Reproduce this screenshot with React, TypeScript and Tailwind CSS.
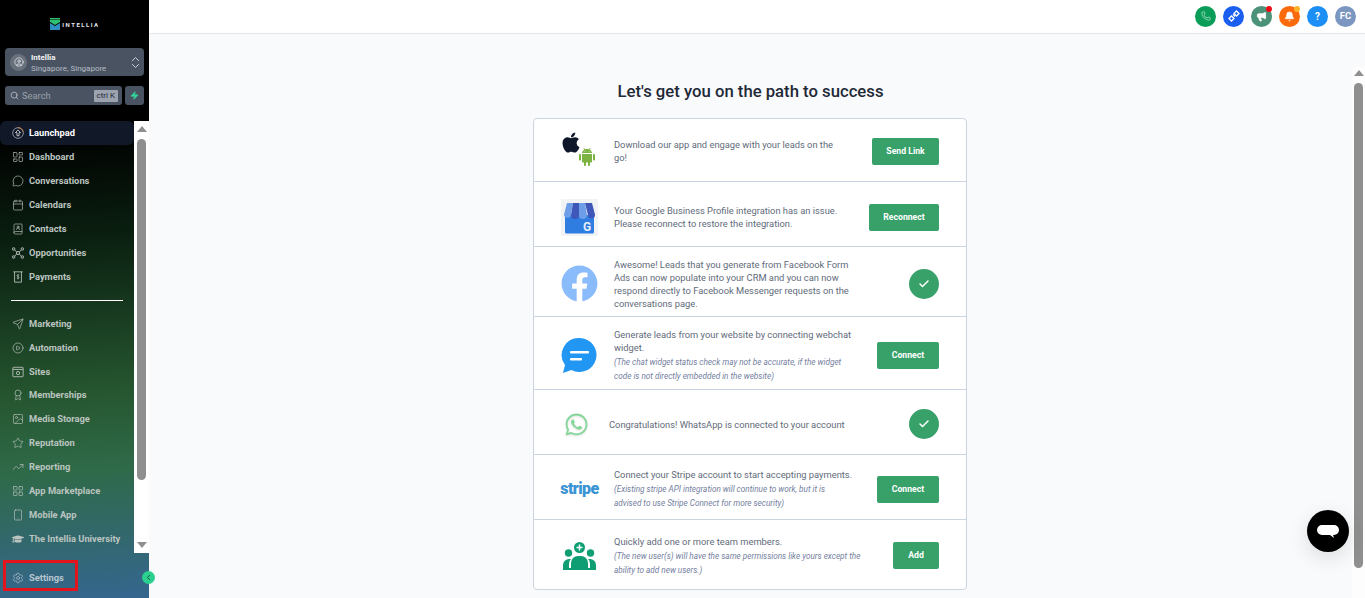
import { ReactNode } from 'react';
import {
  Phone,
  Megaphone,
  Bell,
  LayoutGrid,
  LayoutDashboard,
  MessageCircle,
  Calendar,
  BookUser,
  Send,
  CirclePlay,
  Award,
  Image,
  Star,
  TrendingUp,
  Smartphone,
  Settings,
  Search,
  Zap,
  ChevronsUpDown,
  ChevronLeft,
  CircleUser,
  Check,
} from 'lucide-react';
import { FaApple, FaFacebook, FaGraduationCap } from 'react-icons/fa';
import { FcAndroidOs } from 'react-icons/fc';
import { IoLogoWhatsapp } from 'react-icons/io5';

type IconProps = { className?: string; strokeWidth?: number };

function OpportunitiesIcon({ className }: IconProps) {
  return (
    <svg viewBox="0 0 14 14" className={className} fill="none" stroke="currentColor" strokeWidth="1.100">
      <circle cx="7" cy="7" r="1.800" />
      <rect x="0.600" y="1" width="2.600" height="2.600" rx="0.600" />
      <rect x="10.800" y="1" width="2.600" height="2.600" rx="0.600" />
      <rect x="0.600" y="10.400" width="2.600" height="2.600" rx="0.600" />
      <rect x="10.800" y="10.400" width="2.600" height="2.600" rx="0.600" />
      <path d="M3.200 3.600 5.600 5.800M10.800 3.600 8.400 5.800M3.200 10.400 5.600 8.200M10.800 10.400 8.400 8.200" />
    </svg>
  );
}

function PaymentsIcon({ className }: IconProps) {
  return (
    <svg viewBox="0 0 14 14" className={className} fill="none" stroke="currentColor" strokeWidth="1">
      <path d="M1.500 1h11M3 1v12h8V1" />
      <path d="M8.500 4.800C8 4.200 6 4.100 5.800 5.300c-.200 1.400 2.700 1 2.500 2.500-.200 1.200-2.200 1.100-2.800.400M7 3.600v6.200" strokeWidth="0.800" />
    </svg>
  );
}

function SitesIcon({ className }: IconProps) {
  return (
    <svg viewBox="0 0 14 14" className={className} fill="none" stroke="currentColor" strokeWidth="1">
      <rect x="1" y="1.500" width="12" height="11" rx="0.500" />
      <path d="M1 4h12" />
      <circle cx="7" cy="8.200" r="1.900" />
    </svg>
  );
}

function LaunchpadIcon({ className }: IconProps) {
  return (
    <svg viewBox="0 0 14 14" className={className} fill="none" strokeWidth="0.900">
      <circle cx="7" cy="7" r="6.200" stroke="#aeb4bd" />
      <path d="M7 .800A6.200 6.200 0 0 1 13 5.500" stroke="#f08a3c" />
      <path d="M7 3.400 4 6.600h1.800v3.600h2.400V6.600H10z" stroke="#e5e7eb" />
    </svg>
  );
}

const TOP_NAV = [
  { label: 'Dashboard', icon: LayoutDashboard },
  { label: 'Conversations', icon: MessageCircle },
  { label: 'Calendars', icon: Calendar },
  { label: 'Contacts', icon: BookUser },
  { label: 'Opportunities', icon: OpportunitiesIcon },
  { label: 'Payments', icon: PaymentsIcon },
];

const BOTTOM_NAV = [
  { label: 'Marketing', icon: Send },
  { label: 'Automation', icon: CirclePlay },
  { label: 'Sites', icon: SitesIcon },
  { label: 'Memberships', icon: Award, tight: true },
  { label: 'Media Storage', icon: Image },
  { label: 'Reputation', icon: Star },
  { label: 'Reporting', icon: TrendingUp },
  { label: 'App Marketplace', icon: LayoutGrid },
  { label: 'Mobile App', icon: Smartphone },
  { label: 'The Intellia University', icon: FaGraduationCap },
];

function NavItem({ label, icon: Icon, tight }: { label: string; icon: (p: IconProps) => ReactNode; tight?: boolean }) {
  return (
    <div className={`flex h-6 items-center gap-[5px] pl-[12px] text-[9.330px] font-bold whitespace-nowrap text-[#bcc4c0] ${tight ? '-mt-px' : ''}`}>
      <Icon className="h-[12px] w-[12px] shrink-0" strokeWidth={1.3} />
      <span>{label}</span>
    </div>
  );
}

function Sidebar() {
  return (
    <aside className="flex h-full w-[149px] shrink-0 flex-col bg-[linear-gradient(176deg,#000_22%,#0a1f10_40%,#25552f_65%,#2f6a48_78%,#35668f_100%)]">
      <div className="flex h-[48px] items-center justify-center gap-[2px] pl-[1px]">
        <svg viewBox="0 0 10 12" className="h-[12px] w-[10px]">
          <path d="M0 0h10v1.500H0z" fill="#2fbf71" />
          <path d="M0 2h10v2L5 7 0 4z" fill="#2fbf71" />
          <path d="M0 5l5 3 5-3v7H0z" fill="#2f8fc0" />
        </svg>
        <span className="text-[6px] font-bold tracking-[1.500px] text-[#e5e7eb]">INTELLIA</span>
      </div>

      <div className="mx-[5px] flex h-[28px] items-center rounded-[4px] bg-[#4a5361] pl-[5px] pr-[1px]">
        <div className="flex h-[17px] w-[17px] items-center justify-center rounded-full bg-[#69717d]">
          <CircleUser className="h-[10px] w-[10px] text-white" strokeWidth={1.5} />
        </div>
        <div className="ml-[4px] flex-1 pt-[2px] text-[8px] leading-[11px]">
          <div className="font-bold text-[#f3f4f6]">Intellia</div>
          <div className="text-[#b6bcc5]">Singapore, Singapore</div>
        </div>
        <ChevronsUpDown className="h-[15px] w-[15px] text-[#d1d5db]" strokeWidth={1.5} />
      </div>

      <div className="mx-[5px] mt-[10px] flex gap-[3px]">
        <div className="flex h-[19px] w-[117px] items-center rounded-[3px] bg-[#4a5361] pl-[5px] pr-[4px]">
          <Search className="h-[9px] w-[9px] text-[#c5cad1]" strokeWidth={2} />
          <span className="ml-[3px] flex-1 pt-[1px] text-[9.330px] text-[#9aa1ac]">Search</span>
          <span className="rounded-[1px] bg-[#9ca3af] px-[3px] text-[8px] leading-[12px] text-[#1f2937]">ctrl K</span>
        </div>
        <div className="flex h-[19px] w-[19px] items-center justify-center rounded-[3px] bg-[#4a5361]">
          <Zap className="h-[9px] w-[9px] fill-[#34d399] text-[#34d399]" />
        </div>
      </div>

      <div className="mt-[16px] flex min-h-0 flex-1">
        <div className="w-[134px] shrink-0">
          <div className="flex h-6 items-center gap-[5px] rounded-[6px] bg-[#111827] pl-[12px] text-[9.330px] font-bold text-white">
            <LaunchpadIcon className="h-[12px] w-[12px] shrink-0" />
            <span>Launchpad</span>
          </div>
          {TOP_NAV.map((item) => (
            <NavItem key={item.label} {...item} />
          ))}
          <div className="mx-[11px] my-[11px] h-px bg-white" />
          {BOTTOM_NAV.map((item) => (
            <NavItem key={item.label} {...item} />
          ))}
        </div>
        <div className="flex h-[432px] w-[15px] flex-col items-center bg-white pt-[5px] pb-[5px]">
          <div className="h-0 w-0 border-x-[5px] border-b-[6px] border-x-transparent border-b-[#8f8f8f]" />
          <div className="mt-[7px] h-[341px] w-[9px] rounded-full bg-[#8f8f8f]" />
          <div className="mt-auto h-0 w-0 border-x-[5px] border-t-[6px] border-x-transparent border-t-[#8f8f8f]" />
        </div>
      </div>

      <div className="relative flex h-[45px] shrink-0 items-center">
        <div className="ml-[3px] flex h-[31px] w-[75px] items-center gap-[5px] border-[3px] border-[#e3141c] pt-[5px] pl-[6px] text-[9.330px] font-bold text-[#b9c6d0]">
          <Settings className="h-[12px] w-[12px]" strokeWidth={1.3} />
          <span>Settings</span>
        </div>
        <div className="absolute left-[142px] top-[18px] flex h-[13px] w-[13px] items-center justify-center rounded-full bg-[#2bcf8f]">
          <ChevronLeft className="h-[9px] w-[9px] text-[#14532d]" strokeWidth={2.5} />
        </div>
      </div>
    </aside>
  );
}

function HeaderBadge({ color, dot, children }: { color: string; dot?: string; children: ReactNode }) {
  return (
    <div className={`relative flex h-[21px] w-[21px] items-center justify-center rounded-full text-white ${color}`}>
      {children}
      {dot && <span className={`absolute right-0 top-0 h-[6px] w-[6px] rounded-full ${dot}`} />}
    </div>
  );
}

function Header() {
  return (
    <header className="flex h-[34px] shrink-0 items-center justify-end gap-[7px] border-b border-b-[#e5e7eb] bg-white pr-[9px] pb-[1px]">
      <HeaderBadge color="bg-[#0a9d58]">
        <Phone className="h-[10px] w-[10px] text-[#c9efd8]" strokeWidth={1.6} />
      </HeaderBadge>
      <HeaderBadge color="bg-[#1a5ff0]">
        <svg viewBox="0 0 12 12" className="h-[12px] w-[12px]" fill="none" stroke="#fff" strokeWidth="1.300">
          <path d="M3.500 6 6 8.500 3.500 11 1 8.500z" />
          <path d="M8.500 1 11 3.500 8.500 6 6 3.500z" />
          <path d="M5 4.500 7 6.500" />
        </svg>
      </HeaderBadge>
      <HeaderBadge color="bg-[#4c9279]" dot="bg-[#f00a14]">
        <Megaphone className="h-[11px] w-[11px] fill-white" strokeWidth={1.5} />
      </HeaderBadge>
      <HeaderBadge color="bg-[#fb6a0c]" dot="bg-[#fbb32a]">
        <Bell className="h-[11px] w-[11px] fill-white" strokeWidth={1.5} />
      </HeaderBadge>
      <HeaderBadge color="bg-[#1b8ff5]">
        <span className="text-[10px] font-bold">?</span>
      </HeaderBadge>
      <HeaderBadge color="bg-[#7b96c0]">
        <span className="text-[9.500px] font-bold">FC</span>
      </HeaderBadge>
    </header>
  );
}

function StoreIcon() {
  return (
    <svg viewBox="0 0 37 37" className="h-[37px] w-[37px]">
      <rect width="37" height="37" fill="#f1f3f4" />
      <path d="M4 16h29v17a1.500 1.500 0 0 1-1.500 1.500H5.500A1.500 1.500 0 0 1 4 33z" fill="#2f7de0" />
      <path d="M6 4h6l-2 11a3.500 3.500 0 0 1-7 .500z" fill="#6f9ee8" />
      <path d="M12 4h6v12a4 4 0 0 1-8 0z" fill="#3f57b8" />
      <path d="M18 4h6l2 12a4 4 0 0 1-8 0z" fill="#6f9ee8" />
      <path d="M24 4h7l3 11.500a3.500 3.500 0 0 1-7 .500z" fill="#3f57b8" />
      <text x="26" y="32" textAnchor="middle" fontSize="12" fontWeight="700" fill="#e5edf9" fontFamily="Roboto, sans-serif">
        G
      </text>
    </svg>
  );
}

function MessengerIcon() {
  return (
    <svg viewBox="0 0 37 37" className="h-[37px] w-[37px]">
      <path d="M18.500 1a17 17 0 1 1-8 32L2 36l2-8A17 17 0 0 1 18.500 1z" fill="#2196f3" />
      <rect x="9" y="14" width="19" height="2.500" rx="1" fill="#fff" />
      <rect x="9" y="21" width="12" height="2.500" rx="1" fill="#fff" />
    </svg>
  );
}

function TeamIcon() {
  return (
    <svg viewBox="0 0 33 28" className="h-[28px] w-[33px]">
      <circle cx="16.500" cy="5.500" r="5.500" fill="#0f9d73" />
      <path d="M16.500 2.500v6M13.500 5.500h6" stroke="#fff" strokeWidth="1.500" />
      <circle cx="5.500" cy="11" r="3.700" fill="#0f9d73" />
      <circle cx="27.500" cy="11" r="3.700" fill="#0f9d73" />
      <path d="M0 28v-5a6 6 0 0 1 6-6h2a6 6 0 0 0-2 5v4h21v-4a6 6 0 0 0-2-5h2a6 6 0 0 1 6 6v5z" fill="#0f9d73" />
      <path d="M8 26v-5a7 7 0 0 1 7-7h3a7 7 0 0 1 7 7v5z" fill="#0f9d73" />
    </svg>
  );
}

function ActionButton({ label, width }: { label: string; width: string }) {
  return (
    <button className={`flex h-[27px] items-center justify-center rounded-[2px] bg-[#38a169] text-[8.670px] font-bold text-white ${width}`}>
      {label}
    </button>
  );
}

function DoneBadge() {
  return (
    <div className="flex h-[30px] w-[30px] items-center justify-center rounded-full bg-[#38a169]">
      <Check className="h-[12px] w-[12px] text-white" strokeWidth={3} />
    </div>
  );
}

function Row({
  height,
  icon,
  action,
  textClass = 'pl-[80px]',
  children,
}: {
  height: string;
  icon: ReactNode;
  action: ReactNode;
  textClass?: string;
  children: ReactNode;
}) {
  return (
    <div className={`relative flex items-center border-b border-b-[#cbd5e1] pr-[27px] last:border-b-0 ${height}`}>
      <div className="absolute left-[27px] flex h-[37px] w-[37px] items-center justify-center">{icon}</div>
      <div className={`w-[330px] text-[9.330px] leading-[13px] text-[#5f6b7a] ${textClass}`}>{children}</div>
      <div className="ml-auto">{action}</div>
    </div>
  );
}

function Note({ children }: { children: ReactNode }) {
  return <div className="pt-px text-[8.200px] leading-[14px] text-[#7480a0] italic">{children}</div>;
}

export default function App() {
  return (
    <div className="flex h-[598px] w-[1365px] overflow-hidden bg-[#f9fafb] font-['Roboto',sans-serif]">
      <Sidebar />
      <div className="flex min-w-0 flex-1 flex-col">
        <Header />
        <div className="flex min-h-0 flex-1">
          <main className="flex flex-1 flex-col items-center">
            <h1 className="mt-[48px] text-[16.700px] leading-[20px] font-medium text-[#1f2937]">
              Let's get you on the path to success
            </h1>
            <div className="mt-[16px] mr-[1px] w-[434px] rounded-[4px] border border-[#cbd5e1] bg-white">
              <Row
                height="h-[63px] pt-[2px]"
                icon={
                  <div className="relative h-[37px] w-[37px]">
                    <FaApple className="absolute top-[-2px] left-0 h-[23px] w-[20px] text-[#0f172a]" />
                    <FcAndroidOs className="absolute top-[12px] left-[14px] h-[24px] w-[24px]" />
                  </div>
                }
                action={<ActionButton label="Send Link" width="w-[67px]" />}
              >
                Download our app and engage with your leads on the
                <br />
                go!
              </Row>
              <Row
                height="h-[65px] pt-[6px]"
                icon={<StoreIcon />}
                action={<ActionButton label="Reconnect" width="w-[70px]" />}
              >
                Your Google Business Profile integration has an issue. Please reconnect to restore the integration.
              </Row>
              <Row
                height="h-[70px] pt-[4px]"
                icon={<FaFacebook className="h-[37px] w-[37px] text-[#8abbfb]" />}
                action={<DoneBadge />}
              >
                Awesome! Leads that you generate from Facebook Form Ads can now populate into your CRM and you can now respond directly to Facebook Messenger requests on the conversations page.
              </Row>
              <Row
                height="h-[73px] pt-[4px]"
                icon={<MessengerIcon />}
                action={<ActionButton label="Connect" width="w-[62px]" />}
              >
                Generate leads from your website by connecting webchat widget.
                <Note>
                  (The chat widget status check may not be accurate, if the widget
                  <br />
                  code is not directly embedded in the website)
                </Note>
              </Row>
              <Row
                height="h-[65px] pt-[4px]"
                icon={
                  <div className="mr-[6px] flex items-center justify-center drop-shadow-[0_1px_1px_rgba(0,0,0,0.12)]">
                    <IoLogoWhatsapp className="h-[25px] w-[25px] text-[#86d69c]" />
                  </div>
                }
                action={<DoneBadge />}
                textClass="pl-[75px] whitespace-nowrap"
              >
                Congratulations! WhatsApp is connected to your account
              </Row>
              <Row
                height="h-[65px] pt-[4px]"
                icon={<span className="text-[16px] leading-none font-black tracking-[-0.600px] text-[#3a94d4]">stripe</span>}
                action={<ActionButton label="Connect" width="w-[62px]" />}
              >
                Connect your Stripe account to start accepting payments.
                <Note>
                  (Existing stripe API integration will continue to work, but it is
                  <br />
                  advised to use Stripe Connect for more security)
                </Note>
              </Row>
              <Row
                height="h-[69px] pt-[2px]"
                icon={<TeamIcon />}
                action={<ActionButton label="Add" width="w-[46px]" />}
              >
                Quickly add one or more team members.
                <Note>(The new user(s) will have the same permissions like yours except the ability to add new users.)</Note>
              </Row>
            </div>
          </main>
          <div className="mt-[33px] flex w-[13px] shrink-0 flex-col items-center bg-[#fdfdfe]">
            <div className="mt-[3px] h-0 w-0 border-x-[5px] border-b-[6px] border-x-transparent border-b-[#8f8f8f]" />
            <div className="mt-[7px] h-[485px] w-[9px] rounded-full bg-[#8f8f8f]" />
          </div>
        </div>
      </div>
      <button className="absolute left-[1307px] top-[510px] flex h-[42px] w-[42px] items-center justify-center rounded-full bg-black shadow-[0_6px_20px_rgba(0,0,0,0.12)]">
        <svg viewBox="0 0 22 13" className="h-[13px] w-[22px]">
          <path d="M5 0h12a5 5 0 0 1 0 10h-1l1 3-4-3H5A5 5 0 0 1 5 0z" fill="#fff" />
        </svg>
      </button>
    </div>
  );
}
